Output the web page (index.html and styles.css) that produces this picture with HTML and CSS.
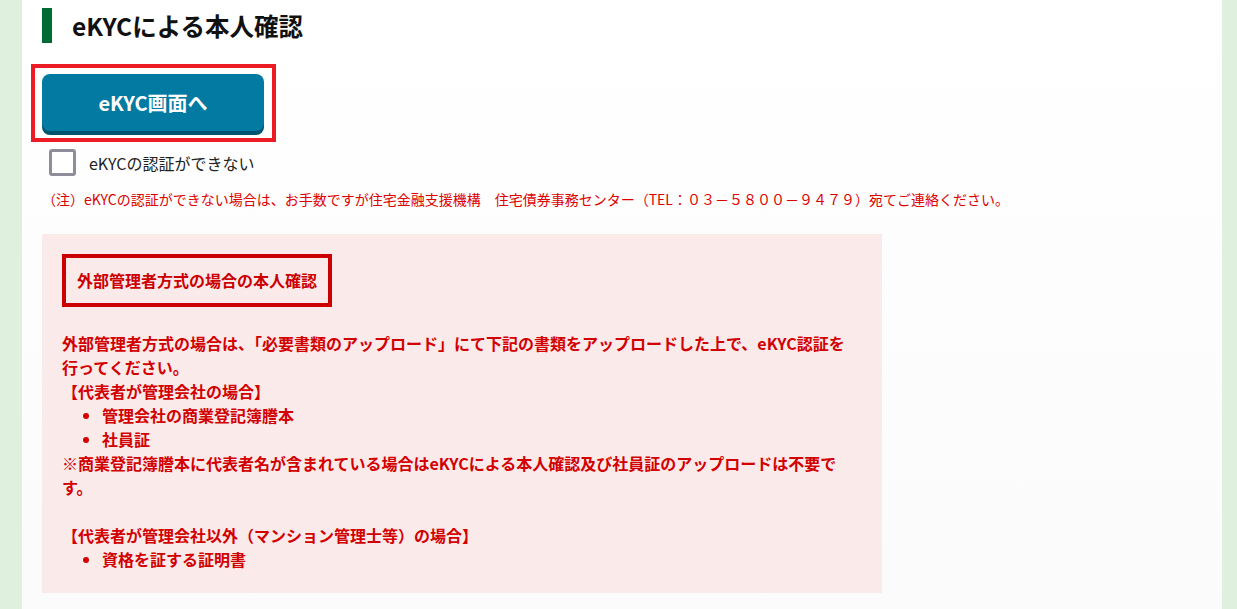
FILE: index.html
```html
<!DOCTYPE html>
<html lang="ja">
<head>
<meta charset="utf-8">
<title>eKYCによる本人確認</title>
<link rel="stylesheet" href="styles.css">
</head>
<body>
<div class="page">
  <main class="main">
    <h2 class="heading"><span class="heading-bar"></span><span class="heading-text">eKYCによる本人確認</span></h2>

    <div class="highlight">
      <button class="ekyc-btn" type="button">eKYC画面へ</button>
    </div>

    <label class="check-row">
      <span class="checkbox"></span>
      <span class="check-label">eKYCの認証ができない</span>
    </label>

    <p class="note">（注）eKYCの認証ができない場合は、お手数ですが住宅金融支援機構　住宅債券事務センター（TEL：０３－５８００－９４７９）宛てご連絡ください。</p>

    <section class="notice">
      <div class="notice-title">外部管理者方式の場合の本人確認</div>
      <div class="notice-body">
        <p>外部管理者方式の場合は、「必要書類のアップロード」にて下記の書類をアップロードした上で、eKYC認証を行ってください。</p>
        <p>【代表者が管理会社の場合】</p>
        <ul>
          <li>管理会社の商業登記簿謄本</li>
          <li>社員証</li>
        </ul>
        <p>※商業登記簿謄本に代表者名が含まれている場合はeKYCによる本人確認及び社員証のアップロードは不要です。</p>
        <p class="blank">&nbsp;</p>
        <p>【代表者が管理会社以外（マンション管理士等）の場合】</p>
        <ul>
          <li>資格を証する証明書</li>
        </ul>
      </div>
    </section>
  </main>
</div>
</body>
</html>
```

FILE: styles.css
```css
html, body {
  margin: 0;
  padding: 0;
}

body {
  background: #dff0df;
  font-family: "Noto Sans CJK JP", "Noto Sans", sans-serif;
  color: #111;
}

.page {
  display: flex;
  min-height: 609px;
}

.main {
  margin-left: 22px;
  width: 1200px;
  min-height: 609px;
  background: linear-gradient(#ffffff, #fbfbfb);
  padding: 8px 20px 0 20px;
  box-sizing: border-box;
}

.heading {
  display: flex;
  align-items: center;
  margin: 0;
  height: 35px;
  gap: 20px;
}

.heading-bar {
  width: 10px;
  height: 35px;
  background: #006a35;
}

.heading-text {
  font-size: 24.5px;
  font-weight: bold;
  line-height: 35px;
  color: #111;
}

.highlight {
  display: inline-flex;
  margin: 21px 0 0 -11px;
  border: 4px solid #ed1c24;
  padding: 6px 8px 3px 7px;
}

.ekyc-btn {
  width: 222px;
  height: 57px;
  margin-bottom: 4px;
  border: none;
  border-radius: 8px;
  background: #027aa2;
  box-shadow: 0 4px 0 #01546e;
  color: #fff;
  font-family: "Noto Sans CJK JP", "Noto Sans", sans-serif;
  font-size: 20px;
  font-weight: bold;
  cursor: pointer;
  padding: 0;
}

.check-row {
  display: flex;
  align-items: center;
  gap: 13px;
  margin: 7px 0 0 7px;
  height: 27px;
}

.checkbox {
  width: 27px;
  height: 27px;
  box-sizing: border-box;
  border: 3px solid #8e8e9a;
  border-radius: 3px;
  background: #fff;
}

.check-label {
  font-size: 16px;
  color: #222;
}

.note {
  margin: 13px 0 0 0;
  font-size: 14px;
  line-height: 20px;
  color: #dd0000;
}

.notice {
  margin-top: 25px;
  width: 840px;
  box-sizing: border-box;
  background: #fbeaea;
  padding: 20px 25px 22px 20px;
  color: #d20000;
  font-weight: bold;
}

.notice-title {
  display: inline-block;
  border: 4px solid #cc0000;
  padding: 12px 11px;
  font-size: 16px;
  line-height: 21px;
  color: #cc0000;
}

.notice-body {
  margin-top: 24px;
  font-size: 16px;
  line-height: 24px;
}

.notice-body p {
  margin: 0;
}

.notice-body ul {
  margin: 0;
  padding-left: 40px;
}
```
